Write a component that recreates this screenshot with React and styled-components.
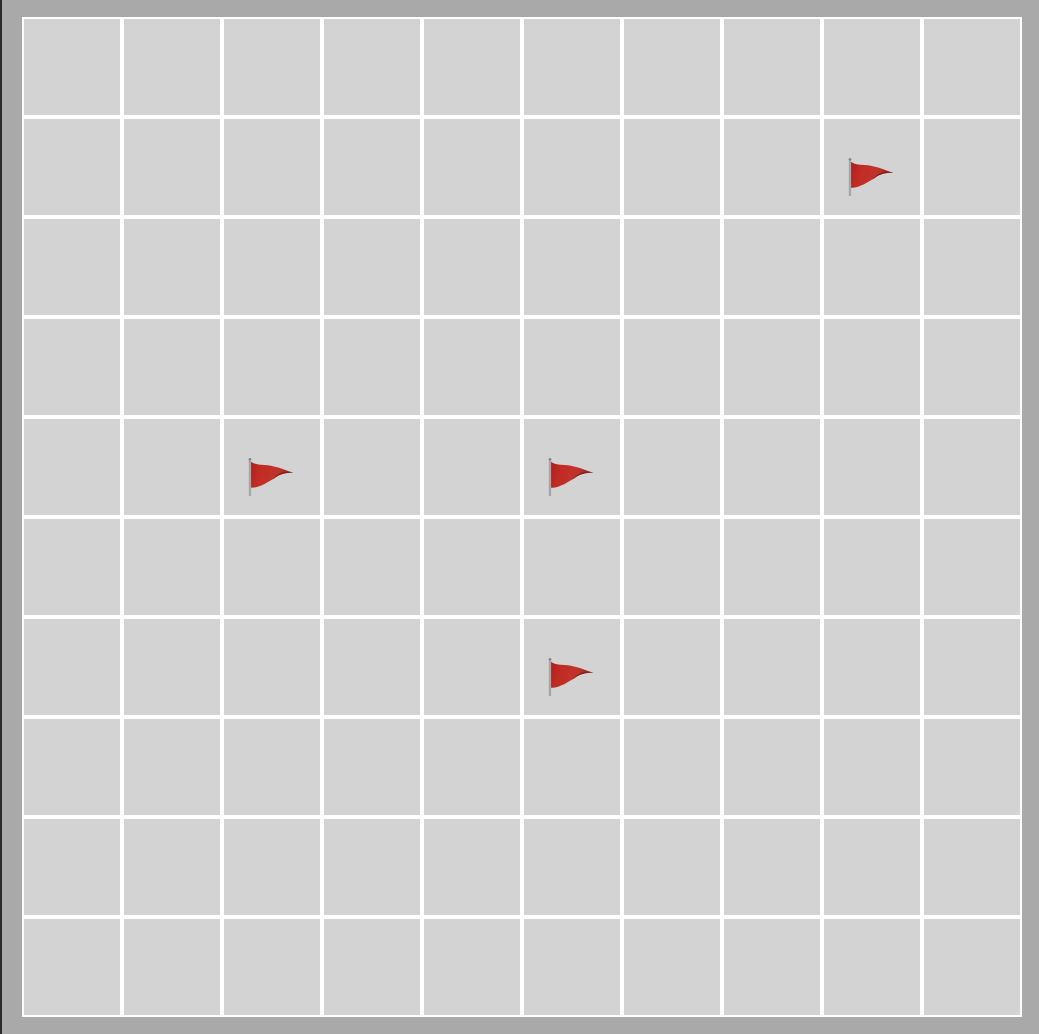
import React from "react";
import styled, { createGlobalStyle } from "styled-components";

const GlobalStyle = createGlobalStyle`
  html, body {
    margin: 0;
    padding: 0;
    background: #a9a9a9;
  }
`;

const Page = styled.div`
  box-sizing: border-box;
  height: 1034px;
  overflow: hidden;
  padding: 17px 0 0 20px;
  background: #a9a9a9;
  border-left: 2px solid #2b2b2b;
`;

const Board = styled.div`
  display: grid;
  grid-template-columns: repeat(10, 100px);
  grid-auto-rows: 100px;
  width: 1000px;
`;

const Cell = styled.div`
  box-sizing: border-box;
  display: flex;
  align-items: center;
  justify-content: center;
  padding-top: 20px;
  background: #d3d3d3;
  border: 2px solid #fff;
`;

const FlagIcon = styled.svg`
  display: block;
  width: 48px;
  height: 40px;
`;

const flags = ["1-8", "4-2", "4-5", "6-5"];

function Flag({ id }) {
  return (
    <FlagIcon viewBox="0 0 48 40">
      <defs>
        <linearGradient id={`cloth-${id}`} x1="0" y1="0" x2="1" y2="0.2">
          <stop offset="0" stopColor="#ab1f1a" />
          <stop offset="0.3" stopColor="#c22c25" />
          <stop offset="0.7" stopColor="#bf332b" />
          <stop offset="1" stopColor="#8a1e19" />
        </linearGradient>
        <filter id={`soft-${id}`} x="-10%" y="-10%" width="120%" height="120%">
          <feGaussianBlur stdDeviation="0.4" />
        </filter>
      </defs>
      <g filter={`url(#soft-${id})`}>
        <path
          d="M2.4 4.4C6 6.5 9 7.6 13 7.8C18 8 22 8.4 26 9.4C33 11 39 13.5 45.5 15.8C40 15.4 36 16 32 17.8C28 19.6 25 22.5 20 25C14 28.5 9 30.8 2.4 30.8Z"
          fill={`url(#cloth-${id})`}
        />
        <path
          d="M45.5 15.8C40 15.4 36 16 32 17.8C29 19.2 27 21 24 22.8C26.5 20.4 28.5 18.6 31.5 16.8C35.5 15 40 15 45.5 15.8Z"
          fill="#7d1c17"
        />
        <rect x="0.8" y="2" width="2.3" height="37" fill="#a3a7ac" />
        <circle cx="2" cy="2.2" r="1.3" fill="#80868f" />
      </g>
    </FlagIcon>
  );
}

export default function App() {
  const cells = [];
  for (let row = 0; row < 10; row++) {
    for (let col = 0; col < 10; col++) {
      const key = `${row}-${col}`;
      cells.push(<Cell key={key}>{flags.includes(key) && <Flag id={key} />}</Cell>);
    }
  }

  return (
    <>
      <GlobalStyle />
      <Page>
        <Board>{cells}</Board>
      </Page>
    </>
  );
}
